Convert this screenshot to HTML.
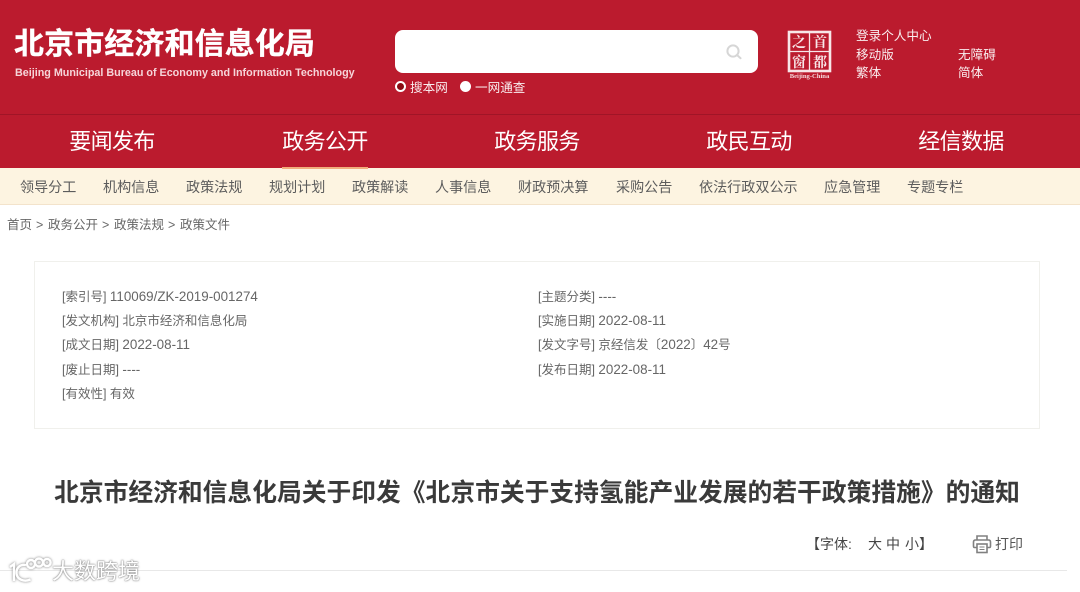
<!DOCTYPE html>
<html lang="zh-CN"><head><meta charset="utf-8"><title>北京市经济和信息化局</title>
<style>
*{margin:0;padding:0;box-sizing:border-box}
html,body{width:1080px;height:592px;overflow:hidden;background:#fff}
body{position:relative;font-family:"Liberation Sans","Noto Sans CJK SC",sans-serif;color:#555}
.a{position:absolute;white-space:nowrap}
.t{font-size:12.6px;line-height:20px;color:#fff;opacity:.92}
.n{font-size:22px;line-height:30px;color:#fff;top:127px;width:100px;text-align:center;letter-spacing:-.6px}
.s{font-size:14.1px;line-height:20px;color:#5c5c5c;top:177px}
.c{font-size:12.5px;line-height:20px;color:#666;top:215px}
.i{font-size:12.5px;line-height:20px;color:#666}
.i b{font-weight:400;font-size:13.4px}
</style></head><body>
<div class="a" style="left:0;top:0;width:1080px;height:168px;background:#bb1b2e"></div>
<div class="a" style="left:0;top:114px;width:1080px;height:1px;background:#a01527"></div>
<div class="a" style="left:14px;top:25px;font-size:30px;line-height:40px;font-weight:700;color:#fff;letter-spacing:.1px;-webkit-text-stroke:.3px #fff">北京市经济和信息化局</div>
<div class="a" style="left:15px;top:65px;font-size:10.76px;line-height:16px;font-weight:700;color:#f6d5d9">Beijing Municipal Bureau of Economy and Information Technology</div>
<div class="a" style="left:395px;top:30px;width:363px;height:43px;background:#fff;border-radius:8px"></div>
<svg class="a" style="left:725px;top:43px" width="18" height="18" viewBox="0 0 18 18" fill="none" stroke="#d6d6d6" stroke-width="2"><circle cx="8" cy="8" r="5.600"/><path d="M12 12l3.600 3.200" stroke-linecap="round"/></svg>
<div class="a" style="left:395px;top:81px;width:11px;height:11px;border-radius:50%;background:#8a0c14;border:2px solid #fff"></div>
<div class="a t" style="left:410px;top:78px">搜本网</div>
<div class="a" style="left:460px;top:81px;width:11px;height:11px;border-radius:50%;background:#fff"></div>
<div class="a t" style="left:475px;top:78px">一网通查</div>
<svg class="a" style="left:784px;top:29px" width="52" height="52" viewBox="0 0 52 52">
<rect x="5" y="3" width="41" height="39" fill="none" stroke="#f8e6e8" stroke-width="2.600"/>
<path d="M25.500 3v39M5 22.500h40" stroke="#f8e6e8" stroke-width="1.300"/>
<text x="15" y="18" font-size="14" font-weight="700" text-anchor="middle" fill="#f8e6e8" font-family="Noto Serif CJK SC,serif">之</text>
<text x="36" y="18" font-size="14" font-weight="700" text-anchor="middle" fill="#f8e6e8" font-family="Noto Serif CJK SC,serif">首</text>
<text x="15" y="38" font-size="14" font-weight="700" text-anchor="middle" fill="#f8e6e8" font-family="Noto Serif CJK SC,serif">窗</text>
<text x="36" y="38" font-size="14" font-weight="700" text-anchor="middle" fill="#f8e6e8" font-family="Noto Serif CJK SC,serif">都</text>
<text x="25.500" y="49" font-size="6.600" text-anchor="middle" fill="#f4d9dc" font-weight="700" font-family="Liberation Serif,serif">Beijing-China</text>
</svg>
<div class="a t" style="left:856px;top:26px">登录个人中心</div>
<div class="a t" style="left:856px;top:45px">移动版</div>
<div class="a t" style="left:958px;top:45px">无障碍</div>
<div class="a t" style="left:856px;top:63px">繁体</div>
<div class="a t" style="left:958px;top:63px">简体</div>
<div class="a n" style="left:62px">要闻发布</div>
<div class="a n" style="left:275px">政务公开</div>
<div class="a n" style="left:487px">政务服务</div>
<div class="a n" style="left:699px">政民互动</div>
<div class="a n" style="left:911px">经信数据</div>
<div class="a" style="left:0;top:168px;width:1080px;height:37px;background:#fdf4e1;border-bottom:1px solid #f3e3cb"></div>
<div class="a" style="left:282px;top:167px;width:86px;height:2px;background:#f2ae7c"></div>
<div class="a s" style="left:20px">领导分工</div>
<div class="a s" style="left:103px">机构信息</div>
<div class="a s" style="left:186px">政策法规</div>
<div class="a s" style="left:269px">规划计划</div>
<div class="a s" style="left:352px">政策解读</div>
<div class="a s" style="left:435px">人事信息</div>
<div class="a s" style="left:518px">财政预决算</div>
<div class="a s" style="left:616px">采购公告</div>
<div class="a s" style="left:699px">依法行政双公示</div>
<div class="a s" style="left:824px">应急管理</div>
<div class="a s" style="left:907px">专题专栏</div>
<div class="a c" style="left:7px">首页</div><div class="a c" style="left:36px">&gt;</div>
<div class="a c" style="left:48px">政务公开</div><div class="a c" style="left:102px">&gt;</div>
<div class="a c" style="left:114px">政策法规</div><div class="a c" style="left:168px">&gt;</div>
<div class="a c" style="left:180px">政策文件</div>
<div class="a" style="left:34px;top:261px;width:1006px;height:168px;border:1px solid #f0f0ec"></div>
<div class="a i" style="left:62px;top:287px">[索引号] <b>110069/ZK-2019-001274</b></div>
<div class="a i" style="left:62px;top:311px">[发文机构] 北京市经济和信息化局</div>
<div class="a i" style="left:62px;top:335px">[成文日期] <b>2022-08-11</b></div>
<div class="a i" style="left:62px;top:360px">[废止日期] <b>----</b></div>
<div class="a i" style="left:62px;top:384px">[有效性] 有效</div>
<div class="a i" style="left:538px;top:287px">[主题分类] <b>----</b></div>
<div class="a i" style="left:538px;top:311px">[实施日期] <b>2022-08-11</b></div>
<div class="a i" style="left:538px;top:335px">[发文字号] 京经信发〔<b>2022</b>〕<b>42</b>号</div>
<div class="a i" style="left:538px;top:360px">[发布日期] <b>2022-08-11</b></div>
<div class="a" style="left:0;top:476px;width:1074px;text-align:center;font-size:24.770px;line-height:36px;font-weight:700;color:#3a3a3a">北京市经济和信息化局关于印发《北京市关于支持氢能产业发展的若干政策措施》的通知</div>
<div class="a" style="left:806px;top:534px;font-size:14px;line-height:20px;color:#444">【字体:</div>
<div class="a" style="left:868px;top:534px;font-size:14px;line-height:20px;color:#444">大</div>
<div class="a" style="left:886px;top:534px;font-size:14px;line-height:20px;color:#444">中</div>
<div class="a" style="left:905px;top:534px;font-size:14px;line-height:20px;color:#444">小】</div>
<svg class="a" style="left:972px;top:534px" width="20" height="20" viewBox="0 0 20 20" fill="none" stroke="#808080" stroke-width="1.600"><path d="M5 6V2h10v4M5 13.500H2.500Q1.500 13.500 1.500 12V8q0-2 2-2h13q2 0 2 2v4q0 1.500-1 1.500H15"/><rect x="5" y="10" width="10" height="8.500"/><path d="M7.500 13h5M7.500 15.500h5" stroke-width="1"/></svg>
<div class="a" style="left:995px;top:534px;font-size:14px;line-height:20px;color:#555">打印</div>
<div class="a" style="left:0;top:570px;width:1067px;height:1px;background:#e8e8e8"></div>
<svg class="a" style="left:6px;top:554px;filter:drop-shadow(0 0 1.200px #777)" width="46" height="32" viewBox="0 0 46 32" fill="none" stroke="#fff" stroke-width="2.400"><path d="M4 13l4-3v17"/><path d="M20 11c-6-1-10 3-9.500 8.500s7 9 14 6"/><circle cx="25" cy="10" r="4"/><circle cx="33" cy="8.500" r="4"/><circle cx="41" cy="8.500" r="3.600"/></svg>
<div class="a" style="left:52px;top:558px;font-size:22px;line-height:28px;color:#fff;text-shadow:0 0 2px #777,0 0 1px #777">大数跨境</div>
</body></html>
